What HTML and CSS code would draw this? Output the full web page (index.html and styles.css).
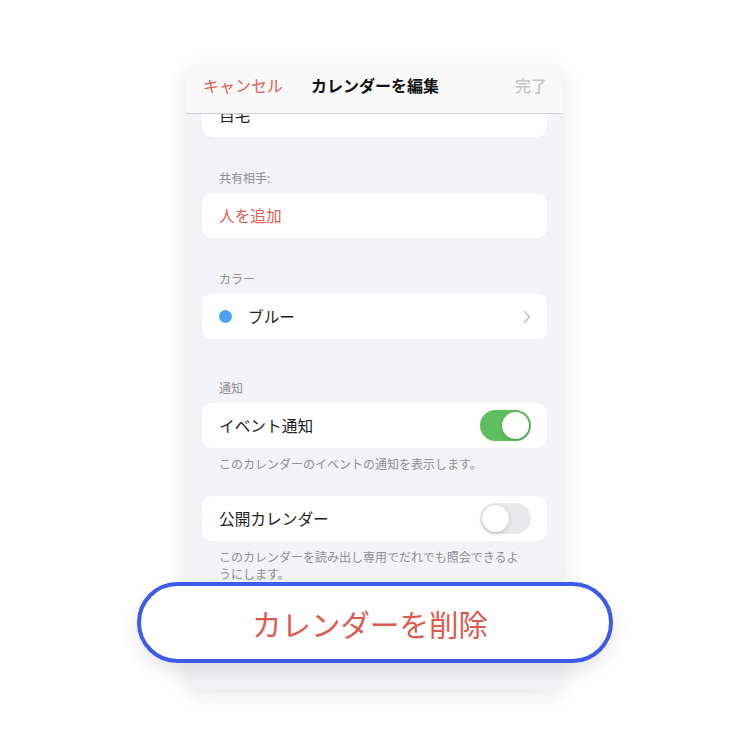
FILE: index.html
```html
<!DOCTYPE html>
<html lang="ja">
<head>
<meta charset="utf-8">
<link rel="stylesheet" href="styles.css">
</head>
<body>
<div class="stage">
  <div class="phone">
    <div class="navbar">
      <span class="nav-cancel">キャンセル</span>
      <span class="nav-title">カレンダーを編集</span>
      <span class="nav-done">完了</span>
    </div>
    <div class="content">
      <div class="group g-first"><div class="row"><span class="row-text">自宅</span></div></div>

      <div class="label l-share">共有相手:</div>
      <div class="group"><div class="row"><span class="row-text red">人を追加</span></div></div>

      <div class="label l-color">カラー</div>
      <div class="group"><div class="row">
        <span class="dot"></span>
        <span class="row-text grow">ブルー</span>
        <svg class="chev" width="8" height="14" viewBox="0 0 8 14"><path d="M1.5 1.5 L6.5 7 L1.5 12.5" fill="none" stroke="#c4c4c8" stroke-width="1.6" stroke-linecap="round" stroke-linejoin="round"/></svg>
      </div></div>

      <div class="label l-notify">通知</div>
      <div class="group"><div class="row">
        <span class="row-text grow">イベント通知</span>
        <span class="toggle on"><span class="knob"></span></span>
      </div></div>
      <div class="footer f-one">このカレンダーのイベントの通知を表示します。</div>

      <div class="group g-public"><div class="row">
        <span class="row-text grow">公開カレンダー</span>
        <span class="toggle"><span class="knob"></span></span>
      </div></div>
      <div class="footer f-two">このカレンダーを読み出し専用でだれでも照会できるようにします。</div>
    </div>
  </div>
  <div class="delete-btn">カレンダーを削除</div>
</div>
</body>
</html>
```

FILE: styles.css
```css
html, body {
  margin: 0;
  padding: 0;
  background: #ffffff;
  font-family: "Noto Sans CJK JP", "Noto Sans", sans-serif;
}

.stage {
  position: relative;
  width: 750px;
  height: 750px;
  overflow: hidden;
}

.phone {
  margin: 63px 0 0 186px;
  width: 377px;
  height: 626px;
  background: #f2f2f7;
  border-radius: 16px;
  overflow: hidden;
  box-shadow: 0 6px 22px rgba(0, 0, 0, 0.10);
  display: flex;
  flex-direction: column;
}

.navbar {
  position: relative;
  z-index: 2;
  height: 51px;
  box-sizing: border-box;
  flex: none;
  background: #f8f8f8;
  border-bottom: 1px solid #cfcfd2;
  display: flex;
  align-items: center;
  justify-content: space-between;
  padding: 0 16px 7px 17px;
  font-size: 16px;
}

.nav-cancel { color: #de5e55; width: 80px; }
.nav-title { color: #111; font-weight: 700; }
.nav-done { color: #c6c6c9; width: 80px; text-align: right; font-weight: 500; }

.content {
  margin-top: -22px;
  padding: 0 16px;
  display: flex;
  flex-direction: column;
}

.group {
  background: #ffffff;
  border-radius: 10px;
}

.row {
  height: 45px;
  display: flex;
  align-items: center;
  padding: 0 16px 0 17px;
}

.row-text {
  font-size: 15.7px;
  color: #1c1c1e;
  line-height: 1;
}

.row-text.red { color: #de5e55; }
.grow { flex: 1; }

.label {
  font-size: 12px;
  line-height: 16px;
  color: #8e8e93;
  padding-left: 17px;
  margin-bottom: 7px;
}

.l-share { margin-top: 33px; }
.l-color { margin-top: 33px; }
.l-notify { margin-top: 41px; margin-bottom: 7px; }

.footer {
  font-size: 12px;
  line-height: 17px;
  color: #8e8e93;
  padding: 0 22px 0 17px;
  margin-top: 7px;
}

.f-one { margin-bottom: 24px; }

.dot {
  width: 13px;
  height: 13px;
  border-radius: 50%;
  background: #4aa3f0;
  margin-right: 16px;
}

.toggle {
  width: 51px;
  height: 31px;
  border-radius: 16px;
  background: #e9e9eb;
  position: relative;
  box-sizing: border-box;
}

.toggle.on { background: #5fbf60; }

.knob {
  position: absolute;
  top: 2px;
  left: 2px;
  width: 27px;
  height: 27px;
  border-radius: 50%;
  background: #ffffff;
  box-shadow: 0 2px 4px rgba(0, 0, 0, 0.15), 0 0 1px rgba(0, 0, 0, 0.15);
}

.toggle.on .knob { left: 22px; }

.delete-btn {
  position: absolute;
  left: 137px;
  top: 582px;
  width: 476px;
  height: 81px;
  box-sizing: border-box;
  border: 4px solid #3c5be6;
  border-radius: 41px;
  background: #ffffff;
  box-shadow: 0 8px 18px rgba(0, 0, 0, 0.10);
  display: flex;
  align-items: center;
  justify-content: center;
  padding-right: 10px;
  font-size: 29.5px;
  color: #dc5a50;
}
```
